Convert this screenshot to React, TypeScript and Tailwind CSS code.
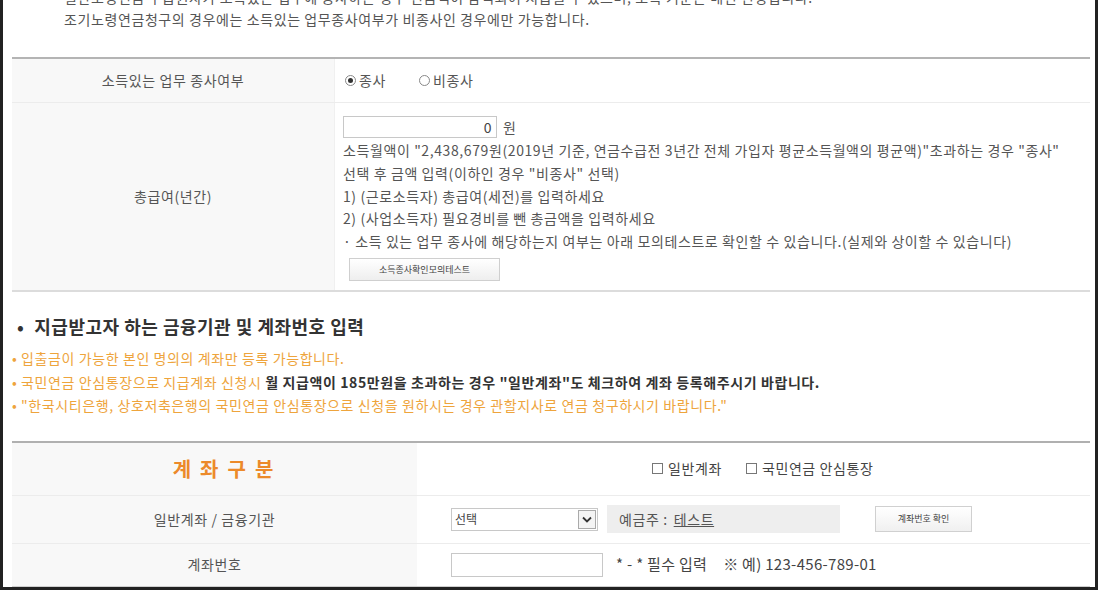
import React from 'react';

const Radio = ({ checked, label }: { checked?: boolean; label: string }) => (
  <span className="flex items-center gap-[3px]">
    <span className="w-[11px] h-[11px] rounded-full border border-[#888] bg-white flex items-center justify-center">
      {checked && <span className="w-[5px] h-[5px] rounded-full bg-[#333]" />}
    </span>
    <span>{label}</span>
  </span>
);

const Check = ({ label }: { label: string }) => (
  <span className="flex items-center gap-[5px]">
    <span className="w-[11px] h-[11px] border border-[#777] bg-white" />
    <span>{label}</span>
  </span>
);

const App = () => {
  return (
    <div className="w-[1098px] h-[590px] overflow-hidden bg-white border-l-[3px] border-r-[3px] border-b-[3px] border-[#222] font-['Noto_Sans_CJK_KR',sans-serif] text-[14px] tracking-[0.6px] text-[#555]">
      <div className="pl-[9px] pr-[5px]">
        {/* intro text, scrolled */}
        <div className="pl-[52px] mt-[-14px] leading-[22px]">
          <p className="whitespace-nowrap">일반노령연금 수급권자가 소득있는 업무에 종사하는 경우 연금액이 감액되어 지급될 수 있으며, 소득 기준은 매년 변경됩니다.</p>
          <p>조기노령연금청구의 경우에는 소득있는 업무종사여부가 비종사인 경우에만 가능합니다.</p>
        </div>

        {/* income table */}
        <div className="mt-[27px] border-t-2 border-b-2 border-t-[#b4b4b4] border-b-[#dcdcdc]">
          <div className="flex h-[44px] border-b border-[#ececec]">
            <div className="w-[323px] bg-[#f8f8f8] flex items-center justify-center border-r border-[#f0f0f0]">소득있는 업무 종사여부</div>
            <div className="flex-1 flex items-center pl-[10px] gap-[33px]">
              <Radio checked label="종사" />
              <Radio label="비종사" />
            </div>
          </div>
          <div className="flex h-[187px]">
            <div className="w-[323px] bg-[#f8f8f8] flex items-center justify-center border-r border-[#f0f0f0]">총급여(년간)</div>
            <div className="flex-1 pl-[8px] pt-[13px]">
              <div className="flex items-center gap-[6px]">
                <div className="w-[154px] h-[22px] border border-[#c8c8c8] flex items-center justify-end pr-[4px] text-[#444]">0</div>
                <span>원</span>
              </div>
              <div className="mt-[1px] leading-[22.8px] whitespace-nowrap">
                <p>소득월액이 "2,438,679원(2019년 기준, 연금수급전 3년간 전체 가입자 평균소득월액의 평균액)"초과하는 경우 "종사"</p>
                <p>선택 후 금액 입력(이하인 경우 "비종사" 선택)</p>
                <p>1) (근로소득자) 총급여(세전)를 입력하세요</p>
                <p>2) (사업소득자) 필요경비를 뺀 총금액을 입력하세요</p>
                <p>· 소득 있는 업무 종사에 해당하는지 여부는 아래 모의테스트로 확인할 수 있습니다.(실제와 상이할 수 있습니다)</p>
              </div>
              <button className="mt-[5px] ml-[6px] w-[151px] h-[23px] border border-[#cfcfcf] bg-gradient-to-b from-white to-[#eeeeee] text-[9px] tracking-normal text-[#444] flex items-center justify-center">소득종사확인모의테스트</button>
            </div>
          </div>
        </div>

        {/* account section */}
        <div className="mt-[22px] flex items-center gap-[10px] text-[18px] tracking-[0.5px] font-bold text-[#333] leading-[24px] pl-[5px]">
          <span>•</span>
          <span>지급받고자 하는 금융기관 및 계좌번호 입력</span>
        </div>
        <div className="mt-[9px] leading-[23.5px] text-[#eea43c] whitespace-nowrap">
          <p>• 입출금이 가능한 본인 명의의 계좌만 등록 가능합니다.</p>
          <p>• 국민연금 안심통장으로 지급계좌 신청시 <b className="text-[#333]">월 지급액이 185만원을 초과하는 경우 "일반계좌"도 체크하여 계좌 등록해주시기 바랍니다.</b></p>
          <p>• "한국시티은행, 상호저축은행의 국민연금 안심통장으로 신청을 원하시는 경우 관할지사로 연금 청구하시기 바랍니다."</p>
        </div>

        <div className="mt-[23px] border-t-2 border-b-2 border-t-[#b0b0b0] border-b-[#cfcfcf]">
          <div className="flex h-[53px] border-b border-[#ececec]">
            <div className="w-[405px] bg-[#f8f8f8] flex items-center justify-center text-[20px] font-bold text-[#ec8a2a] tracking-[9px] pl-[26px]">계좌구분</div>
            <div className="flex-1 flex items-center pl-[235px] gap-[24px] text-[14px] text-[#444]">
              <Check label="일반계좌" />
              <Check label="국민연금 안심통장" />
            </div>
          </div>
          <div className="flex h-[48px] border-b border-[#ececec]">
            <div className="w-[405px] bg-[#f8f8f8] flex items-center justify-center">일반계좌 / 금융기관</div>
            <div className="flex-1 flex items-center pl-[34px]">
              <div className="w-[147px] h-[23px] border border-[#c8c8c8] flex items-center justify-between pl-[3px] pr-[1px] text-[12px] tracking-normal text-[#444]">
                <span>선택</span>
                <span className="w-[18px] h-[19px] border border-[#aaa] bg-[#f4f4f4] flex items-center justify-center">
                  <svg width="10" height="7" viewBox="0 0 10 7"><path d="M1 1.5 L5 5.5 L9 1.5" fill="none" stroke="#333" strokeWidth="1.8" /></svg>
                </span>
              </div>
              <div className="ml-[9px] w-[233px] h-[28px] bg-[#eeeeee] flex items-center pl-[12px] text-[#555]">
                예금주 : <span className="ml-[6px] underline">테스트</span>
              </div>
              <button className="ml-[35px] w-[97px] h-[26px] border border-[#d0d0d0] bg-gradient-to-b from-white to-[#f0f0f0] text-[9px] tracking-normal text-[#444] flex items-center justify-center">계좌번호 확인</button>
            </div>
          </div>
          <div className="flex h-[42px]">
            <div className="w-[405px] bg-[#f8f8f8] flex items-center justify-center">계좌번호</div>
            <div className="flex-1 flex items-center pl-[34px] text-[15px] tracking-[0.3px] text-[#444]">
              <div className="w-[152px] h-[24px] border border-[#c8c8c8]" />
              <span className="ml-[13px]">* - * 필수 입력</span>
              <span className="ml-[16px]">※ 예) 123-456-789-01</span>
            </div>
          </div>
        </div>
      </div>
    </div>
  );
};

export default App;
